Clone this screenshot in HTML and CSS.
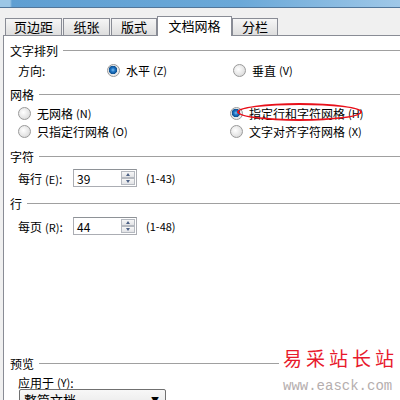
FILE: index.html
```html
<html>
  <head>
    <title>页面设置</title>
    <meta charset="utf-8">
    <link rel="stylesheet" href="styles.css">
  </head>
  <body>
    <div class="titlebar"></div>

    <div class="tabs">
      <div class="tab tab--w57">页边距</div>
      <div class="tab tab--w47">纸张</div>
      <div class="tab tab--w46">版式</div>
      <div class="tab tab--active">文档网格</div>
      <div class="tab tab--w46">分栏</div>
    </div>

    <div class="panel">
      <div class="hdr hdr--first">文字排列</div>
      <div class="row row--dir">
        <span class="label label--dir">方向:</span>
        <span class="opt opt--dir"><i class="radio radio--on"></i>水平<small>(Z)</small></span>
        <span class="opt"><i class="radio"></i>垂直<small>(V)</small></span>
      </div>

      <div class="hdr hdr--grid">网格</div>
      <div class="grid">
        <span class="opt"><i class="radio"></i>无网格<small>(N)</small></span>
        <span class="opt opt--mark"><i class="radio radio--on"></i>指定行和字符网格<small>(H)</small><b class="ring"></b></span>
        <span class="opt"><i class="radio"></i>只指定行网格<small>(O)</small></span>
        <span class="opt"><i class="radio"></i>文字对齐字符网格<small>(X)</small></span>
      </div>

      <div class="hdr hdr--chars">字符</div>
      <div class="row row--num">
        <span class="label label--num">每行<small>(E)</small>:</span>
        <span class="spin">
          <span class="spin__val">39</span>
          <span class="spin__btns"><i class="spin__up"></i><i class="spin__down"></i></span>
        </span>
        <span class="range">(1-43)</span>
      </div>

      <div class="hdr hdr--lines">行</div>
      <div class="row row--num">
        <span class="label label--num">每页<small>(R)</small>:</span>
        <span class="spin">
          <span class="spin__val">44</span>
          <span class="spin__btns"><i class="spin__up"></i><i class="spin__down"></i></span>
        </span>
        <span class="range">(1-48)</span>
      </div>

      <div class="hdr hdr--preview">预览</div>
      <div class="row row--apply">应用于<small>(Y)</small>:</div>
      <div class="select">
        <span>整篇文档</span>
        <span class="select__arrow">▼</span>
      </div>
    </div>

    <div class="watermark">
      <div class="watermark__name">易采站长站</div>
      <div class="watermark__url">www.easck.com</div>
    </div>
  </body>
</html>
```

FILE: styles.css
```css
body {
  margin: 0;
  background: #f0f0f0;
  font-family: "Noto Sans CJK SC", "DejaVu Sans", sans-serif;
  font-size: 12px;
  color: #000;
  overflow: hidden;
  height: 400px;
}

small {
  font-size: 11px;
  margin-left: 3px;
}

.titlebar {
  height: 7px;
  background: linear-gradient(to right, #9cc7e6 0, #9cc7e6 10px, #5f9fd2 12px, #6aa8d8 60%, #9fc8e8 100%);
  border-bottom: 1px solid #51769a;
}

/* tabs */
.tabs {
  display: flex;
  align-items: flex-end;
  height: 19px;
  margin-top: 8px;
  padding-left: 5px;
  position: relative;
  z-index: 1;
}

.tab {
  box-sizing: border-box;
  height: 17px;
  margin-right: 1px;
  border: 1px solid #898c95;
  border-bottom: none;
  background: linear-gradient(#f6f6f6, #dedede);
  text-align: center;
  line-height: 16px;
  font-size: 13px;
}
.tab--w57 { width: 57px; }
.tab--w47 { width: 47px; }
.tab--w46 { width: 46px; }

.tab--active {
  width: 75px;
  height: 20px;
  margin: 0 0 -1px -1px;
  background: #fff;
  line-height: 17px;
}

/* panel */
.panel {
  margin-left: 3px;
  border-top: 1px solid #898c95;
  border-left: 1px solid #898c95;
  background: #fff;
  height: 400px;
  padding-top: 6px;
}

.hdr {
  display: flex;
  align-items: center;
  height: 16px;
  padding-left: 6px;
  font-size: 12px;
}
.hdr::after {
  content: "";
  flex: 1;
  height: 1px;
  margin-left: 5px;
  background: #a0a0a0;
}
.hdr--grid { margin-top: 7px; }
.hdr--chars { margin-top: 8px; }
.hdr--lines { margin-top: 8px; }
.hdr--preview { margin-top: 120px; }

.row {
  display: flex;
  align-items: center;
  height: 18px;
  padding-left: 14px;
}
.row--dir { margin-top: 3px; }
.row--num { margin-top: 5px; }
.hdr--lines + .row--num { margin-top: 6px; }
.row--apply { height: 14px; margin-top: 4px; }

.label--dir { width: 89px; }
.label--num { width: 55px; }

.opt {
  display: flex;
  align-items: center;
  height: 18px;
  position: relative;
}
.opt--dir { width: 126px; }

.radio {
  box-sizing: border-box;
  width: 13px;
  height: 13px;
  margin-right: 6px;
  border-radius: 50%;
  border: 1px solid #9a9a9a;
  background: radial-gradient(circle at 40% 40%, #ffffff 0, #e6e6e6 55%, #cfcfcf 100%);
}
.radio--on {
  background: radial-gradient(circle at 45% 45%, #7fc0f0 0, #1f76c6 2px, #0d4f8f 4px, #e8e8e8 4.5px, #f5f5f5 100%);
}

.grid {
  display: grid;
  grid-template-columns: 212px 1fr;
  margin-top: 2px;
  padding-left: 14px;
}

.ring {
  position: absolute;
  left: 7px;
  top: -1px;
  width: 125px;
  height: 18px;
  box-sizing: border-box;
  border: 2px solid #e8101a;
  border-radius: 50%;
}

/* spin box */
.spin {
  box-sizing: border-box;
  display: flex;
  align-items: center;
  justify-content: space-between;
  width: 64px;
  height: 18px;
  border: 1px solid #abadb3;
  border-top-color: #8e9297;
  padding: 0 1px 0 3px;
}
.spin__btns {
  display: flex;
  flex-direction: column;
}
.spin__up,
.spin__down {
  box-sizing: border-box;
  width: 14px;
  height: 7px;
  border: 1px solid #b5b9c0;
  background: linear-gradient(#f7f7f7, #e2e3e6);
  position: relative;
}
.spin__up::after,
.spin__down::after {
  content: "";
  position: absolute;
  left: 4px;
  border-left: 2.5px solid transparent;
  border-right: 2.5px solid transparent;
}
.spin__up::after {
  top: 1px;
  border-bottom: 3px solid #4d6185;
}
.spin__down::after {
  top: 1px;
  border-top: 3px solid #4d6185;
}
.range {
  margin-left: 9px;
  font-size: 11px;
}

/* apply-to drop down */
.select {
  box-sizing: border-box;
  display: flex;
  align-items: center;
  justify-content: space-between;
  width: 147px;
  height: 20px;
  margin: 0 0 0 15px;
  padding: 0 6px 0 4px;
  border: 1px solid #707070;
  border-radius: 2px;
  background: linear-gradient(#f7f7f7, #e8e8e8);
  font-size: 13px;
}
.select__arrow {
  font-size: 8px;
}

/* site watermark */
.watermark {
  position: absolute;
  left: 279px;
  top: 343px;
  width: 121px;
  background: #fff;
  padding-left: 4px;
}
.watermark__name {
  color: #e8192c;
  font-size: 19px;
  letter-spacing: 4px;
  line-height: 30px;
}
.watermark__url {
  color: #b5aeae;
  font-family: "Liberation Mono", monospace;
  font-size: 14px;
  line-height: 22px;
  margin-top: 2px;
}
```
